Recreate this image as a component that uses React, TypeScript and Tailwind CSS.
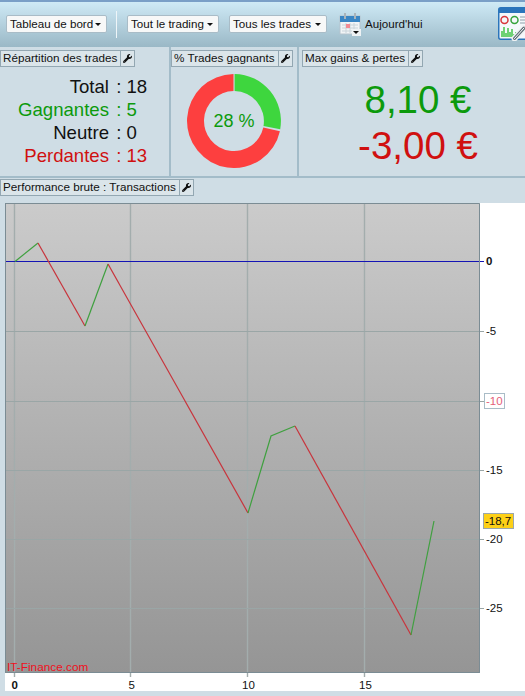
import { FaWrench } from 'react-icons/fa';

const FONT = "font-['Liberation_Sans',Arial,sans-serif]";

const segments: { pts: string; color: string }[] = [
  { pts: '10,58.5 33,40', color: '#3fa03f' },
  { pts: '33,40 80,123', color: '#c8343c' },
  { pts: '80,123 103,61', color: '#3fa03f' },
  { pts: '103,61 243,310', color: '#c8343c' },
  { pts: '243,310 266,233 290,223', color: '#3fa03f' },
  { pts: '290,223 406,432', color: '#c8343c' },
  { pts: '406,432 429,318', color: '#3fa03f' },
];

const hGrid = [128, 198, 267, 336, 405];
const vGrid = [10, 126, 243, 360];

const stats = [
  { label: 'Total', value: '18', color: 'text-[#111]' },
  { label: 'Gagnantes', value: '5', color: 'text-[#0c9a0c]' },
  { label: 'Neutre', value: '0', color: 'text-[#111]' },
  { label: 'Perdantes', value: '13', color: 'text-[#d01010]' },
];

function Dropdown({ label, width }: { label: string; width: string }) {
  return (
    <button className={`flex h-[18px] items-center justify-between rounded-[2px] border border-[#a9bcc7] bg-[#f7f8f8] pl-[3px] pr-[5px] text-[11.6px] text-[#111] ${width}`}>
      {label}
      <span className="mt-[1px] h-0 w-0 border-x-[3px] border-t-[3px] border-x-transparent border-t-[#111]" />
    </button>
  );
}

function PanelTitle({ title }: { title: string }) {
  return (
    <div className="flex h-[17px] items-stretch border border-[#93a7b2] bg-[#dbe5ea] text-[11.7px] leading-[14px] text-[#111]">
      <span className="whitespace-nowrap pl-[2px] pr-[3px]">{title}</span>
      <span className="flex w-[14px] items-center justify-center border-l border-[#93a7b2]">
        <FaWrench className="h-[9px] w-[9px] text-[#111]" />
      </span>
    </div>
  );
}

function CalendarIcon() {
  return (
    <svg width="22" height="24" viewBox="0 0 22 24">
      <rect x="1" y="4" width="20" height="18" fill="#f1f4f6" stroke="#b6c4cd" />
      <rect x="1" y="4" width="20" height="6" fill="#3a86c4" />
      <rect x="5" y="1" width="2" height="6" fill="#a9b4ba" />
      <rect x="15" y="1" width="2" height="6" fill="#a9b4ba" />
      <path d="M3 13h16M3 16h16M3 19h16M7 11v10M11 11v10M15 11v10" stroke="#c9d4da" strokeWidth="1" />
      <rect x="7" y="12" width="4" height="4" fill="#f08a94" />
      <rect x="13" y="17" width="9" height="7" fill="#eef2f4" />
      <path d="M14 19h6l-3 3z" fill="#111" />
    </svg>
  );
}

function DashboardIcon() {
  return (
    <svg width="27" height="34" viewBox="0 0 27 34" className="absolute left-[498px] top-[7px]">
      <rect x="0.75" y="0.75" width="36" height="31.5" rx="2" fill="#f4f8fb" stroke="#2a74bb" strokeWidth="1.5" />
      <rect x="1" y="1" width="35" height="5" fill="#2a74bb" />
      <circle cx="6.5" cy="13" r="3.5" fill="none" stroke="#d8363c" strokeWidth="1.5" />
      <circle cx="16.5" cy="13" r="3.5" fill="none" stroke="#36a33c" strokeWidth="1.5" />
      <path d="M22 10h5M22 13h5M22 16h5" stroke="#8fa0aa" strokeWidth="1" />
      <path d="M4 30V24M6 30V20M8 30V26M10 30V21M12 30V25M14 30V22M16 30V27M18 30V25" stroke="#36c03c" strokeWidth="1.4" />
      <path d="M16.5 31.5L26 21" stroke="#eef2f4" strokeWidth="6" strokeLinecap="round" />
      <path d="M16.5 31.5L26 21" stroke="#5d6b74" strokeWidth="3" strokeLinecap="round" />
      <path d="M16.5 31.5L26 21" stroke="#fff" strokeWidth="1" strokeLinecap="round" />
    </svg>
  );
}

function Donut() {
  // 28 % de gagnants, départ en haut
  return (
    <div className="relative h-[94px] w-[94px]">
      <svg width="94" height="94" viewBox="0 0 94 94">
        <path d="M47.6 0 A47 47 0 0 1 93.2 55.2 L76.5 52 A30 30 0 0 0 47.6 17 Z" fill="#3ed63e" />
        <path d="M92.9 57.2 A47 47 0 1 1 46.5 0 L46.5 17 A30 30 0 1 0 76.3 53.5 Z" fill="#fd3f3f" />
      </svg>
      <span className="absolute inset-0 flex items-center justify-center text-[18px] text-[#0c9a0c]">28 %</span>
    </div>
  );
}

function Chart() {
  return (
    <div className="relative ml-[5px] h-[488px] w-[520px] bg-white">
      <svg width="520" height="488" viewBox="0 0 520 488" className="block">
        <defs>
          <linearGradient id="plot" x1="0" y1="0" x2="0" y2="1">
            <stop offset="0" stopColor="#cbcbcb" />
            <stop offset="1" stopColor="#959595" />
          </linearGradient>
        </defs>
        <rect x="0" y="0" width="475" height="470" fill="url(#plot)" />
        {vGrid.map(x => (
          <line key={x} x1={x - 0.5} x2={x - 0.5} y1="1" y2="474" stroke="#a3adad" strokeWidth="1.4" />
        ))}
        {hGrid.map(y => (
          <line key={y} x1="1" x2="479" y1={y + 0.5} y2={y + 0.5} stroke="#9aa6a6" />
        ))}
        <line x1="1" x2="479" y1="58.5" y2="58.5" stroke="#1414b4" strokeWidth="1" />
        <path d="M0 0.5H474.5V469.5H0" fill="none" stroke="#7b8c94" />
        <path d="M0.5 0V470" stroke="#7b8c94" />
        {segments.map(s => (
          <polyline key={s.pts} points={s.pts} fill="none" stroke={s.color} strokeWidth="1.2" />
        ))}
        <g fontSize="11.5" fill="#111" fontFamily="Liberation Sans">
          <text x="481" y="62" fontWeight="700">0</text>
          <text x="481" y="132">-5</text>
          <text x="481" y="271">-15</text>
          <text x="481" y="340">-20</text>
          <text x="481" y="409">-25</text>
          <text x="6.5" y="486" fontWeight="700">0</text>
          <text x="123.5" y="486">5</text>
          <text x="237" y="486">10</text>
          <text x="354" y="486">15</text>
        </g>
        <text x="2" y="468" fontSize="11.8" fill="#f01020" fontFamily="Liberation Sans">IT-Finance.com</text>
      </svg>
      <span className="absolute left-[479px] top-[190px] h-[16px] border border-[#a9bcc7] bg-white px-[1px] text-[11.5px] leading-[14px] text-[#e4607a]">-10</span>
      <span className="absolute left-[478px] top-[310px] h-[16px] w-[31px] border border-[#9aa7ad] bg-[#fdd017] px-[1px] text-[11.5px] leading-[14px] text-[#111]">-18,7</span>
    </div>
  );
}

export default function App() {
  return (
    <div className={`relative h-[696px] w-[525px] overflow-hidden bg-[#cfdde5] ${FONT}`}>
      <div className="h-[2px] bg-[#7a9fc7]" />
      <header className="flex h-[45px] items-center bg-gradient-to-b from-[#cfeaf6] to-[#9ab8c6] pb-[1px] pl-[6px]">
        <Dropdown label="Tableau de bord" width="w-[101px]" />
        <div className="ml-[9px] mr-[10px] h-[27px] w-[1px] bg-[#eef5f8]" />
        <Dropdown label="Tout le trading" width="w-[92px]" />
        <div className="w-[10px]" />
        <Dropdown label="Tous les trades" width="w-[98px]" />
        <div className="ml-[12px] flex items-center gap-[4px] text-[11.6px] text-[#111]">
          <CalendarIcon />
          Aujourd'hui
        </div>
        <DashboardIcon />
      </header>

      <section className="flex h-[131px] border-b-2 border-[#a3bcc9]">
        <div className="w-[171px] border-r-2 border-[#a3bcc9] pt-[3px]">
          <div className="flex">
            <PanelTitle title="Répartition des trades" />
          </div>
          <ul className="mt-[8px] grid grid-cols-[109px_auto] text-[18.6px] leading-[23px]">
            {stats.map(s => (
              <li key={s.label} className={`contents ${s.color}`}>
                <span className="text-right">{s.label}</span>
                <span className="whitespace-pre pl-[2px]">{' : '}{s.value}</span>
              </li>
            ))}
          </ul>
        </div>
        <div className="flex w-[128px] flex-col items-start border-r-2 border-[#a3bcc9] pt-[3px]">
          <PanelTitle title="% Trades gagnants" />
          <div className="ml-[16px] mt-[7px]">
            <Donut />
          </div>
        </div>
        <div className="flex-1 pl-[3px] pt-[3px]">
          <div className="flex">
            <PanelTitle title="Max gains & pertes" />
          </div>
          <div className="mt-[10px] pl-[9px] text-center text-[38.5px] leading-[46px]">
            <p className="text-[#0c9a0c]">8,10 €</p>
            <p className="text-[#d01010]">-3,00 €</p>
          </div>
        </div>
      </section>

      <div className="flex h-[25px] items-start pt-[1px]">
        <PanelTitle title="Performance brute : Transactions" />
      </div>
      <Chart />
    </div>
  );
}
